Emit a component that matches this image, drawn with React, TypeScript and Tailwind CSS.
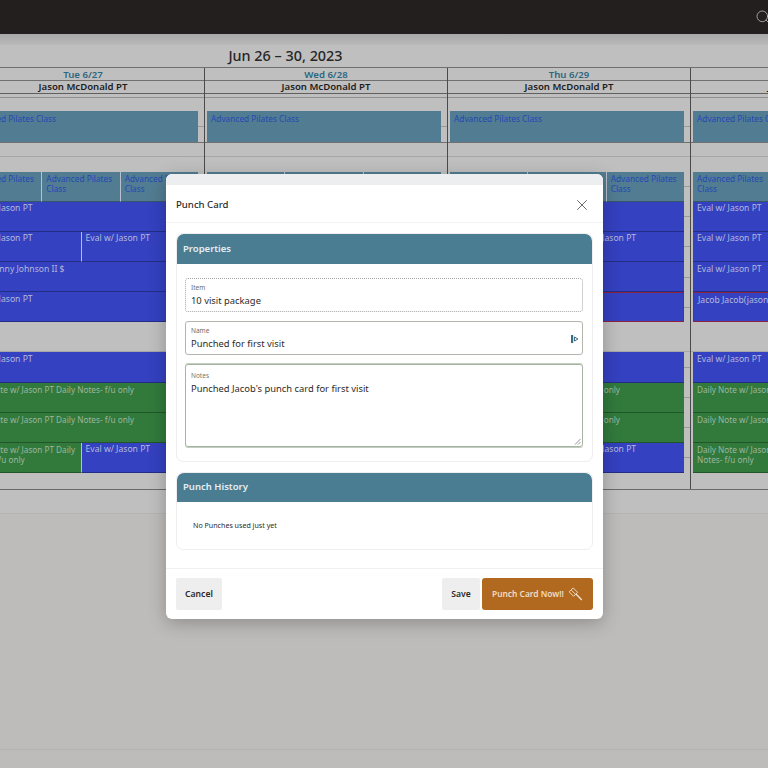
import { Search, X } from "lucide-react";

type Tone = "class" | "eval" | "note";
type Ev = { label: string; tone: Tone; red?: boolean };
type Slot = Ev[] | null;

const toneClass: Record<Tone, string> = {
  class: "bg-[#527c92] text-[#2549b4] text-[8.3px]",
  eval: "bg-[#3441c0] text-[#b4b9dc] text-[8.6px]",
  note: "bg-[#317a3c] text-[#9fb59f] text-[8.2px]",
};

const eval1: Ev = { label: "Eval w/ Jason PT", tone: "eval" };
const note: Ev = { label: "Daily Note w/ Jason PT Daily Notes- f/u only", tone: "note" };
const pilates: Ev = { label: "Advanced Pilates Class", tone: "class" };

const tue: Slot[] = [
  [pilates, pilates, pilates],
  [eval1],
  [eval1, eval1],
  [{ label: "Eval Johnny Johnson II $", tone: "eval" }],
  [eval1],
  null,
  [eval1],
  [note],
  [note],
  [note, eval1],
];

const days: { title: string; slots: Slot[] }[] = [
  { title: "Tue 6/27", slots: tue },
  { title: "Wed 6/28", slots: tue },
  {
    title: "Thu 6/29",
    slots: [
      [pilates, pilates, pilates],
      [eval1],
      [eval1, eval1],
      [eval1],
      [{ ...eval1, red: true }],
      null,
      [eval1],
      [note],
      [note],
      [note, eval1],
    ],
  },
  {
    title: "Fri 6/30",
    slots: [
      [pilates, pilates, pilates],
      [eval1],
      [eval1],
      [eval1],
      [{ label: "Jacob Jacob(jason@example.com)", tone: "eval", red: true }],
      null,
      [eval1],
      [note],
      [note],
      [note, eval1],
    ],
  },
];

function Gutter() {
  return (
    <div className="flex w-[6px] shrink-0 flex-col">
      <div className="flex-1 border-b border-[#9a9a9a]" />
      <div className="flex-1" />
    </div>
  );
}

function EventSlot({ slot }: { slot: Slot }) {
  if (!slot) return <div className="h-[30.15px] border-b border-[#a6a6a6]" />;
  return (
    <div className="flex h-[30.15px] pl-[2px]">
      <div className="flex min-w-0 flex-1">
        {slot.map((ev, i) => (
          <div
            key={i}
            className={`min-w-0 flex-1 overflow-hidden pl-[4px] pt-[2.5px] leading-[9.5px] ${toneClass[ev.tone]} ${i > 0 ? "border-l border-l-[#b8c0d0]" : ""} ${ev.red ? "border border-[#8c2340]" : "border-b border-b-black/30"}`}
          >
            {ev.label}
          </div>
        ))}
      </div>
      <Gutter />
    </div>
  );
}

function DayColumn({ title, slots }: { title: string; slots: Slot[] }) {
  return (
    <div className="w-[243px] shrink-0 border-r border-[#4a4a4a]">
      <div className="h-[13px] border-b border-[#707070] text-center text-[9.6px] font-semibold leading-[13px] text-[#2c6680]">{title}</div>
      <div className="h-[13px] border-b border-[#5f5f5f] text-center text-[9.6px] font-semibold leading-[12px] text-[#1c1c1c]">Jason McDonald PT</div>
      <div className="h-[4px] border-b border-[#8f8f8f]" />
      <div className="h-[13px]" />
      <div className="flex h-[30.6px] pl-[2px]">
        <div className="flex-1 bg-[#527c92] px-[4px] pt-[2.5px] text-[8.3px] leading-[9.5px] text-[#2549b4]">Advanced Pilates Class</div>
        <Gutter />
      </div>
      <div className="h-[15px] border-b border-[#a6a6a6] border-t border-t-[#707070]" />
      <div className="h-[15px]" />
      {slots.map((slot, i) => (
        <EventSlot key={i} slot={slot} />
      ))}
      <div className="h-[16px]" />
    </div>
  );
}

function Field({ label, value, dotted, icon }: { label: string; value: string; dotted?: boolean; icon?: boolean }) {
  return (
    <div className={`relative h-[34px] rounded-[3px] border px-[5px] pt-[5px] ${dotted ? "border-dotted border-[#a8a8a8]" : "border-[#b5b5b0]"}`}>
      <div className="text-[6.5px] leading-[8px] text-[#6f6c69]">{label}</div>
      <div className="text-[9.4px] leading-[17px] text-[#2d2b29]">{value}</div>
      {icon && (
        <svg className="absolute right-[3px] top-[12px]" width="9" height="10" viewBox="0 0 9 10">
          <rect x="1" y="1" width="2.2" height="8" fill="#3e6c82" />
          <path d="M4.5 3 L8 5 L4.5 7 Z" fill="none" stroke="#3e6c82" strokeWidth="1" />
        </svg>
      )}
    </div>
  );
}

function SectionCard({ title, children }: { title: string; children: React.ReactNode }) {
  return (
    <section className="rounded-[7px] border border-[#eeeeee]">
      <div className="flex h-[29.5px] items-center rounded-t-[7px] bg-[#4a7c92] px-[6px] text-[9.5px] font-semibold text-[#e6eef2]">{title}</div>
      {children}
    </section>
  );
}

export default function App() {
  return (
    <div className="relative h-[768px] w-[768px] overflow-hidden bg-[#bdbcba] font-['Noto_Sans',sans-serif]">
      <header className="flex h-[34px] items-center justify-end bg-[#231f1e] text-[#bdbdbd]">
        <Search className="-mr-[3px] h-[16px] w-[16px]" strokeWidth={1.2} />
      </header>
      <div className="h-[11px] bg-gradient-to-b from-[#a8a8a8] to-[#b9b9b9]" />
      <div className="ml-[-38px] w-[1000px] bg-[#bfbfbf]">
        <div className="h-[22px] w-[647px] text-center text-[14.4px] font-medium leading-[22px] text-[#262626]">Jun 26 – 30, 2023</div>
        <div className="flex border-y border-[#707070] border-b-[#6a6a6a]">
          {days.map((d) => (
            <DayColumn key={d.title} title={d.title} slots={d.slots} />
          ))}
        </div>
        <div className="mt-[1px] h-[22px] bg-[#bfbfbf]" />
      </div>
      <div className="h-[237px] border-y border-y-[#b4b4b2]" />

      <div className="absolute left-[166px] top-[174px] flex h-[445px] w-[437px] flex-col overflow-hidden rounded-[6px] bg-white shadow-[0_4px_18px_rgba(0,0,0,0.25)]">
        <div className="h-[11px] bg-[#eceeef]" />
        <div className="flex h-[38px] items-center justify-between border-b border-[#f3f3f3] px-[10px] pt-[3px]">
          <span className="text-[9.6px] font-medium text-[#2d2b29]">Punch Card</span>
          <X className="mr-[2px] h-[18px] w-[18px] text-[#3a3a3a]" strokeWidth={1} />
        </div>
        <div className="flex flex-1 flex-col gap-[10px] pl-[10px] pr-[10.5px] pt-[10px]">
          <SectionCard title="Properties">
            <div className="flex h-[197px] flex-col gap-[9px] pl-[8px] pr-[9px] pt-[14px]">
              <Field label="Item" value="10 visit package" dotted />
              <Field label="Name" value="Punched for first visit" icon />
              <div className="relative h-[83px] rounded-[3px] border border-[#a7b3a3] px-[5px] pt-[7px] shadow-[0_-1px_0_#c4cdc1,0_1px_0_#c4cdc1]">
                <div className="text-[6.5px] leading-[8px] text-[#6f7a6c]">Notes</div>
                <div className="text-[9.4px] leading-[17px] text-[#2d2b29]">Punched Jacob's punch card for first visit</div>
                <svg className="absolute bottom-[1px] right-[1px]" width="7" height="7" viewBox="0 0 7 7">
                  <path d="M1 6.5 L6.5 1 M4 6.5 L6.5 4" stroke="#777" strokeWidth="0.8" />
                </svg>
              </div>
            </div>
          </SectionCard>
          <SectionCard title="Punch History">
            <div className="h-[47px] pl-[16px] pt-[18px] text-[7.1px] leading-[10px] text-[#2d2b29]">No Punches used just yet</div>
          </SectionCard>
        </div>
        <div className="flex h-[51px] items-start justify-between border-t border-[#f0f0f0] px-[10px] pt-[9px]">
          <button className="h-[32px] w-[46px] rounded-[2px] bg-[#eeeeee] text-[8.6px] font-semibold text-[#2d2b29]">Cancel</button>
          <div className="flex gap-[2px]">
            <button className="h-[32px] w-[38px] rounded-[2px] bg-[#eeeeee] text-[8.6px] font-semibold text-[#2d2b29]">Save</button>
            <button className="flex h-[32px] w-[111px] items-center gap-[4px] rounded-[3px] bg-[#b0691f] pl-[10px] text-[8.4px] font-semibold text-[#f0dcc4]">
              Punch Card Now!!
              <svg width="15" height="15" viewBox="0 0 15 15" fill="none" stroke="#f3e4d2" strokeWidth="0.9">
                <path d="M5.2 0.9 L9.6 5.3 L5.6 9.3 L1.2 4.9 Z" />
                <path d="M3.2 3 L7.6 7.4" />
                <path d="M8 7 L13.8 13" strokeWidth="1.3" />
              </svg>
            </button>
          </div>
        </div>
      </div>
    </div>
  );
}
